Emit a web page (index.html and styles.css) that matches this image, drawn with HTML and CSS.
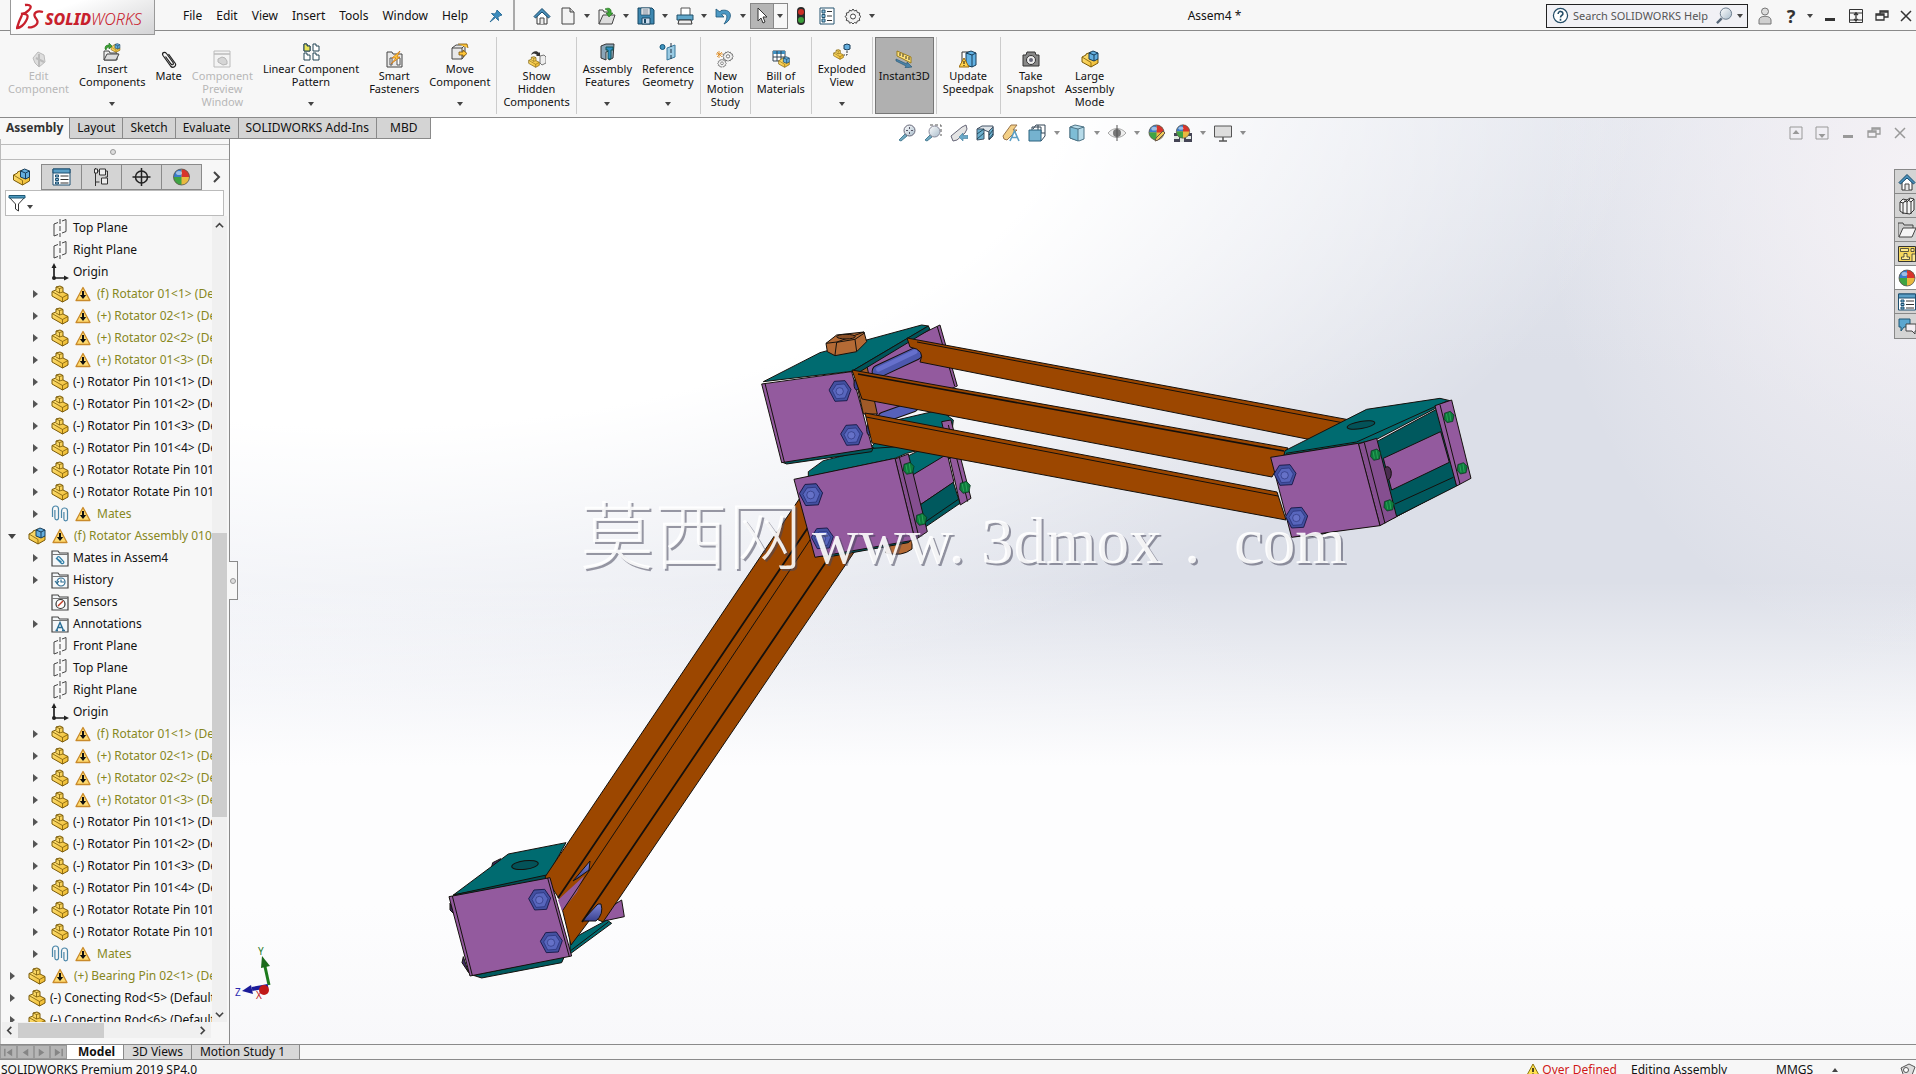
FILE: index.html
```html
<!DOCTYPE html>
<html lang="en">
<head>
<meta charset="utf-8">
<title>Assem4 - SOLIDWORKS</title>
<link rel="stylesheet" href="styles.css">
</head>
<body>
<svg class="defs" aria-hidden="true">
  <defs>
    <linearGradient id="gold" x1="0" y1="0" x2="1" y2="1"><stop offset="0" stop-color="#ffe680"/><stop offset="1" stop-color="#efb82a"/></linearGradient>
    <linearGradient id="steel" x1="0" y1="0" x2="0" y2="1"><stop offset="0" stop-color="#7d85d8"/><stop offset="1" stop-color="#39418e"/></linearGradient>
    <linearGradient id="glass" x1="0" y1="0" x2="1" y2="1"><stop offset="0" stop-color="#fff"/><stop offset="1" stop-color="#a9bccb"/></linearGradient>
  </defs>
  <symbol id="home" viewBox="0 0 18 18"><path d="M4 9v8h10V9L9 4z" fill="#fff" stroke="#333"/><path d="M7 17v-6h4v6" fill="#e8e8e8" stroke="#444"/><path d="M1 9.500 9 1.500l8 8-1.500 1.500L9 5l-6.500 6z" fill="#4a90ba" stroke="#16486a"/></symbol>
  <symbol id="page" viewBox="0 0 18 18"><path d="M3 1h8l4 4v12H3z" fill="#f3f3f3" stroke="#444"/><path d="M11 1v4h4" fill="#ccc" stroke="#444"/></symbol>
  <symbol id="open" viewBox="0 0 18 18"><path d="M1 17V3h4l1 2h6v3" fill="#eee" stroke="#444"/><path d="M1 17 5 8h12l-3 9z" fill="#ddd" stroke="#444"/><path d="M7 2c4-2 7 0 6 4h2l-4 4-3-4h2c1-2-1-3-3-4z" fill="#3ea536" stroke="#1d6a1a" stroke-width=".6"/></symbol>
  <symbol id="save" viewBox="0 0 18 18"><path d="M1 1h14l2 2v14H1z" fill="#3d87b0" stroke="#174663"/><path d="M4 1h9v7H4z" fill="#fff" stroke="#174663" stroke-width=".7"/><path d="M5.500 3h6M5.500 5h6M5.500 7h6" stroke="#678"/><path d="M5 11h8v6H5z" fill="#cde" stroke="#174663"/><path d="M7 12h2v4H7z" fill="#174663"/></symbol>
  <symbol id="print" viewBox="0 0 18 18"><path d="M5 8V1h9v7" fill="#fff" stroke="#555"/><path d="M1 8h16v5H1z" fill="#62a8cb" stroke="#21506b"/><path d="M3 13h12l1 4H2z" fill="#eee" stroke="#333"/></symbol>
  <symbol id="undo" viewBox="0 0 18 18"><path d="M1 2v8h8L6.500 7.500C12 5 14 10 9 17c9-4 9-16-3-13.500L5 5z" fill="#4d99c4" stroke="#1d5578" stroke-width=".8"/></symbol>
  <symbol id="cursor" viewBox="0 0 18 18"><path d="M5 1v13l3-3 2 5 2-1-2-5h4z" fill="#fff" stroke="#333"/></symbol>
  <symbol id="lights" viewBox="0 0 18 18"><rect x="5" y="0" width="8" height="18" rx="4" fill="#2a2a2a"/><circle cx="9" cy="5" r="3" fill="#cc2f26"/><circle cx="9" cy="13" r="3" fill="#3c9f3c"/></symbol>
  <symbol id="props" viewBox="0 0 18 18"><path d="M2 1h14v16H2z" fill="#fff" stroke="#24536f"/><path d="M4 3h3v3H4zM4 7.500h3v3H4zM4 12h3v3H4z" fill="#8cc3e0" stroke="#24536f"/><path d="M9 4.500h5M9 9h5M9 13.500h5" stroke="#333"/></symbol>
  <symbol id="gear" viewBox="0 0 18 18"><path d="M9 2l1.500 2 2-.8.8 2.300 2.400.5-.4 2.300L17 9.500l-1.700 1.700.4 2.300-2.400.5-.8 2.200-2-.7L9 17l-1.500-1.500-2 .7-.8-2.200-2.400-.5.4-2.300L1 9.500l1.700-1.200L2.300 6l2.400-.5.8-2.300 2 .8z" fill="#f2f2f2" stroke="#444"/><circle cx="9" cy="9.500" r="2.500" fill="#fff" stroke="#444"/></symbol>
  <symbol id="pin" viewBox="0 0 14 14"><path d="M8 1l5 5-2 .5-2 2 .5 3-3-3L1 13l4.500-5.500-3-3 3 .5 2-2z" fill="#3b8bbd" stroke="#2a6d98"/></symbol>
  <symbol id="part" viewBox="0 0 18 18"><path d="M1 6.500 5 5V2l4-1 3 1.500V7l5 2.500v4.500L11.500 17 1 11z" fill="url(#gold)" stroke="#7a5a08"/><path d="M1 6.500 11.500 12.500 17 9.500M11.500 12.500V17M5 2l3.500 1.500L12 2.500M8.500 3.500V8L5 6M8.500 8 12 7" fill="none" stroke="#7a5a08" stroke-width=".8"/></symbol>
  <symbol id="asm" viewBox="0 0 18 18"><path d="M1 7 5 5V4l5-2 4 7 3 0v4L10 17 1 12z" fill="url(#gold)" stroke="#7a5a08"/><path d="M1 7l9 5.500V17" fill="none" stroke="#7a5a08" stroke-width=".8"/><path d="M8 3l4-2 5 2v6l-4 2-5-2z" fill="#64aede" stroke="#183c58"/><path d="M8 3l5 2 4-2M13 5v6" fill="none" stroke="#183c58"/></symbol>
  <symbol id="plane" viewBox="0 0 18 18"><path d="M7 3.500 3 5v12l4-1.500M11 2l4-1.500v12L11 14" fill="none" stroke="#444"/><path d="M9 0v18" stroke="#444" stroke-dasharray="5 2"/></symbol>
  <symbol id="origin" viewBox="0 0 18 18"><path d="M3 3v12h12" fill="none" stroke="#222" stroke-width="1.700"/><path d="M3 0 5.500 5h-5zM18 15l-5 2.500v-5z" fill="#222"/><circle cx="3" cy="15" r="2" fill="#222"/></symbol>
  <symbol id="mates" viewBox="0 0 18 18"><path d="M1.500 12V4a3 3 0 0 1 6 0v9a1.800 1.800 0 0 1-3.600 0V5M10.500 13V6a3 3 0 0 1 6 0v8a1.800 1.800 0 0 1-3.600 0V7" fill="none" stroke="#4a86a8" stroke-width="1.200"/></symbol>
  <symbol id="warn" viewBox="0 0 16 16"><path d="M8 1.500 15 14.500H1z" fill="#ffdb70" stroke="#c98a2a" stroke-linejoin="round" stroke-width="1.300"/><path d="M8 5v5" stroke="#111" stroke-width="2"/><path d="M4.800 9h6.400L8 13z" fill="#111"/></symbol>
  <symbol id="folder" viewBox="0 0 18 18"><path d="M1 17V2h6l1.500 2H17v13z" fill="#f4f7f9" stroke="#444" stroke-width="1.200"/><path d="M1 5.500h16" stroke="#777"/></symbol>
  <symbol id="fmates" viewBox="0 0 18 18"><use href="#folder"/><path d="M5 9l5 5c2 2 4-1 2-2L8.500 8c-2-1-3 1-2 2l4 3" fill="none" stroke="#2e7da6" stroke-width="1.200"/></symbol>
  <symbol id="fhist" viewBox="0 0 18 18"><use href="#folder"/><circle cx="10" cy="11" r="4" fill="#fff" stroke="#2e6d92" stroke-width="1.200"/><path d="M10 8.500V11h3M4 10l2 2.500L8 10" fill="none" stroke="#2e6d92" stroke-width="1.200"/></symbol>
  <symbol id="fsens" viewBox="0 0 18 18"><use href="#folder"/><circle cx="9.500" cy="11" r="4.500" fill="#fff" stroke="#333" stroke-width="1.200"/><path d="M7 13l5-5" stroke="#c43b25" stroke-width="1.500"/></symbol>
  <symbol id="fann" viewBox="0 0 18 18"><use href="#folder"/><path d="M5.500 15.500 9 7.500l3.500 8M7 12.500h4M4.500 15.500h2.500M11 15.500h3" fill="none" stroke="#2b6f96" stroke-width="1.400"/></symbol>
  <symbol id="ball" viewBox="0 0 18 18"><circle cx="9" cy="9" r="8" fill="#e9b93f"/><path d="M9 9V1a8 8 0 0 1 8 8z" fill="#d8342b"/><path d="M9 9H1a8 8 0 0 1 8-8z" fill="#3a7ccb"/><path d="M9 9v8a8 8 0 0 1-8-8z" fill="#3fa443"/><circle cx="9" cy="9" r="8" fill="none" stroke="#555" stroke-width=".8"/><ellipse cx="6.500" cy="5" rx="3" ry="2" fill="#fff" opacity=".5"/></symbol>
  <symbol id="config" viewBox="0 0 18 18"><path d="M3 0v18M3 3h4M3 14h4" fill="none" stroke="#333"/><path d="M2 1h3v4H2zM7 1h6v6H7zM9 10h6v6H9z" fill="#eee" stroke="#333"/><path d="M13 3h2v6h-2" fill="none" stroke="#333"/></symbol>
  <symbol id="target" viewBox="0 0 18 18"><circle cx="9" cy="9" r="6" fill="none" stroke="#222" stroke-width="1.500"/><path d="M9 0v18M0 9h18" stroke="#222" stroke-width="1.500"/></symbol>
  <symbol id="list" viewBox="0 0 18 18"><path d="M0.500 1h17v16H.5z" fill="#fff" stroke="#1d4f70"/><path d="M.5 1h17v4H.5z" fill="#5a9fc6" stroke="#1d4f70"/><path d="M3 7h3v2H3zM3 10.500h3v2H3zM3 14h3v2H3z" fill="#8cc3e0" stroke="#1d4f70"/><path d="M8 8h8M8 11.500h8M8 15h8" stroke="#333"/></symbol>
  <symbol id="funnel" viewBox="0 0 18 18"><path d="M1 3h16l-6.500 7v7l-3-2v-5z" fill="#fff" stroke="#333"/><path d="M1 1.500h16V4H1z" fill="#4d9abf" stroke="#1e5876"/></symbol>
  <symbol id="clip" viewBox="0 0 18 18"><path d="M5.500 6.500l5.500 7.500c1.500 1.500 3 .5 2-1.500L6.500 3.500C4.500 1 1.500 3 3 5.500l7.500 10.500c2.500 3 6.500 0 4.500-3L8.500 4" fill="none" stroke="#222" stroke-width="1.200"/></symbol>
  <symbol id="insert" viewBox="0 0 18 18"><use href="#asm" x="7" y="0" width="11" height="10"/><path d="M1 17V8h5l1 2h7v7z" fill="#eee" stroke="#444"/><path d="M1 17l3-6h12l-3 6z" fill="#ddd" stroke="#444"/><path d="M2 6c0-3 1-4 4-4V0l3 3-3 3V4C4 4 4 5 3 7z" fill="#3ea536" stroke="#1d6a1a" stroke-width=".6"/></symbol>
  <symbol id="preview" viewBox="0 0 18 18"><path d="M1 1h16v16H1z" fill="#f3f3f3" stroke="#bbb"/><path d="M1 4h16" stroke="#bbb" stroke-width="1.500"/><path d="M5 9l4-2 3 1 2 3v3l-4 1-5-3z" fill="#d5d5d5" stroke="#b5b5b5"/></symbol>
  <symbol id="editc" viewBox="0 0 18 18"><path d="M3 8l5-6 6 3 1 7-6 5-4-4z" fill="#ddd" stroke="#bbb"/><path d="M9 4v13M6 8l8 4" stroke="#bbb" stroke-width="2"/></symbol>
  <symbol id="pattern" viewBox="0 0 18 18"><path d="M2 1h3v2h3v5H2zM11 1h3v2h3v5h-6zM2 10h3v2h3v5H2zM11 10h3v2h3v5h-6z" fill="#fff" stroke="#245"/><path d="M2 1h3v2h3v5H2z" fill="#e8e45a" stroke="#245"/></symbol>
  <symbol id="smart" viewBox="0 0 18 18"><path d="M2 17V2h5l1 2h9v13z" fill="#e9e9e9" stroke="#444"/><path d="M5 15V8h2v7zM12 8h3v7h-3z" fill="#fff" stroke="#555"/><path d="M15 1 7 8h4l-5 6 9-7h-3z" fill="#ffc73a" stroke="#c56d10" stroke-width=".7"/></symbol>
  <symbol id="move" viewBox="0 0 18 18"><path d="M1 5l4-3h9v10l-3 4H1z" fill="#e8e8e8" stroke="#444"/><path d="M1 5h10v11M11 5l3-3" fill="none" stroke="#444"/><path d="M7 1h9l1 4M8 9h4V7l4 3.500L12 14v-2H8z" fill="#ffc73a" stroke="#7a5208" stroke-width=".8"/></symbol>
  <symbol id="show" viewBox="0 0 18 18"><use href="#part" x="0" y="6" width="12" height="12"/><path d="M12 6l4-1 2 2v6l-4 2-2-2z" fill="#eee" stroke="#777"/><path d="M3 5c1-4 6-5 8-2l1-1v4H8l1-1C7 3 5 3 3 5z" fill="#333"/></symbol>
  <symbol id="feat" viewBox="0 0 18 18"><path d="M3 3l5-2h8l-1 14-4 2V8L8 9v8l-5-2z" fill="#8aa5b8" stroke="#333"/><path d="M8 4h7v3h-2v9h-3V7H8z" fill="#2e8ec4" stroke="#155"/></symbol>
  <symbol id="refgeo" viewBox="0 0 18 18"><circle cx="3.500" cy="4" r="2.500" fill="#3f93bd" stroke="#155478"/><path d="M8 5l8-3v12l-8 3z" fill="#9bcbe3" stroke="#36789c"/><path d="M12 0v18" stroke="#234" stroke-dasharray="4 2"/></symbol>
  <symbol id="motion" viewBox="0 0 18 18"><use href="#gear" x="6" y="0" width="12" height="12"/><use href="#gear" x="1" y="8" width="10" height="10"/><path d="M3 1v7M0 4h7M1 2l5 5M6 2 1 7" stroke="#d98314" stroke-width=".8"/></symbol>
  <symbol id="bom" viewBox="0 0 18 18"><path d="M1 1h12v10H1z" fill="#fff" stroke="#345"/><path d="M1 1h12v3H1z" fill="#3e8fc0"/><path d="M1 7h12M5 1v10M9 1v10" stroke="#345"/><use href="#asm" x="6" y="6" width="12" height="12"/></symbol>
  <symbol id="explode" viewBox="0 0 18 18"><use href="#part" x="0" y="6" width="11" height="11"/><path d="M11 2l3-1 3 1v4l-3 1-3-1z" fill="#64aede" stroke="#183c58"/><path d="M14 8v4h-3" fill="none" stroke="#333" stroke-dasharray="2 1"/></symbol>
  <symbol id="instant" viewBox="0 0 18 18"><path d="M2 1l14 6v6L2 6z" fill="#ffe27a" stroke="#9a7c1c"/><path d="M5 3v3M8 4v3M11 6v3M14 7v3" stroke="#333"/><path d="M1 9l11 5v-2l5 5-7 1 1-2L1 11z" fill="#4a83a8" stroke="#23536f" stroke-width=".6"/></symbol>
  <symbol id="update" viewBox="0 0 18 18"><path d="M3 2h8v14H3z" fill="#fff" stroke="#333"/><path d="M7 3l5-2 5 2v12l-4 2-6-2z" fill="#62b2e4" stroke="#183c58"/><path d="M7 3l6 2 4-2M13 5v12" fill="none" stroke="#183c58"/><path d="M5 8l5 9H0z" fill="#ffd24d" stroke="#9a6a08"/><path d="M5 11v3M5 15v1" stroke="#111"/></symbol>
  <symbol id="camera" viewBox="0 0 18 18"><path d="M1 5h3l1-3h8l1 3h3v11H1z" fill="#888" stroke="#333"/><circle cx="9" cy="10" r="4.500" fill="#eee" stroke="#333"/><circle cx="9" cy="10" r="2" fill="#667"/></symbol>
  <symbol id="zoomfit" viewBox="0 0 18 18"><path d="M1 16 7 10l2 2-6 5z" fill="#72a9c0" stroke="#4a7f96"/><circle cx="11.500" cy="6.500" r="5.500" fill="url(#glass)" stroke="#667"/><path d="M11.500 3v7M8 6.500h7" stroke="#556" stroke-dasharray="2 3"/></symbol>
  <symbol id="zoomarea" viewBox="0 0 18 18"><path d="M6 1h11v11" fill="none" stroke="#555" stroke-dasharray="3 2"/><path d="M1 16 6 11l2 2-5 4z" fill="#72a9c0" stroke="#4a7f96"/><circle cx="10.500" cy="7.500" r="5.500" fill="url(#glass)" stroke="#889"/></symbol>
  <symbol id="prev" viewBox="0 0 18 18"><path d="M1 12 12 3l4-2 1 4-2 4-8 7-4 1z" fill="#e4e4e4" stroke="#667"/><path d="M9 13l4-4v2.500h5v3h-5V17z" fill="#6aa8c7" stroke="#427e9c" stroke-width=".6"/></symbol>
  <symbol id="section" viewBox="0 0 18 18"><path d="M1 5l5-3h11v9l-4 4V8l-5-2z" fill="#dde3e8" stroke="#456"/><path d="M1 5h7v10l-7 1z" fill="#6cb0cf" stroke="#456"/><path d="M13 7l4-4v9l-4 4z" fill="#6cb0cf" stroke="#456"/><path d="M1 10l7-5M1 15l7-6M13 11l4-5M13 15l4-5" stroke="#134" stroke-width=".8"/></symbol>
  <symbol id="dynann" viewBox="0 0 18 18"><path d="M1 12 9 1h6l-4 5h4L5 16l-3-1z" fill="#f3cf86" stroke="#99744a"/><path d="M8 17l4.500-10L17 17M10 13.500h5" fill="none" stroke="#5c9fc4" stroke-width="1.600"/></symbol>
  <symbol id="orient" viewBox="0 0 18 18"><path d="M5 5l3-4h9v11l-4 5" fill="#fff" stroke="#345"/><path d="M4 6V3h9v6h4M10 1v8" fill="none" stroke="#345"/><path d="M1 6h12v11H1z" fill="#75b2cf" stroke="#2d637e"/></symbol>
  <symbol id="cube" viewBox="0 0 18 18"><path d="M2 3l5-2 9 2v12l-5 2-9-3z" fill="#b7dbe9" stroke="#4d7385"/><path d="M2 3l8 2v12l-8-3z" fill="#7ebdd6" stroke="#4d7385"/><path d="M10 5l6-2" stroke="#4d7385"/></symbol>
  <symbol id="eye" viewBox="0 0 18 18"><path d="M0 9c5-6 13-6 18 0-5 6-13 6-18 0z" fill="#eee" stroke="#aaa"/><circle cx="9" cy="9" r="4" fill="#777"/><path d="M9 1v16" stroke="#555"/></symbol>
  <symbol id="appear" viewBox="0 0 18 18"><use href="#ball" width="17" height="17"/><path d="M8 14 15 7l2 2-7 7-3 1z" fill="#f0c95a" stroke="#654"/></symbol>
  <symbol id="scene" viewBox="0 0 18 18"><path d="M0 9h18v9H0z" fill="#445"/><path d="M0 12h5v3H0zM6 14h4v4H6zM12 12h5v3h-5z" fill="#dfe6df"/><use href="#ball" x="1" width="16" height="15"/></symbol>
  <symbol id="monitor" viewBox="0 0 18 18"><path d="M0.500 2h17v11H.5z" fill="#ddd" stroke="#555"/><path d="M9 13v4M5 17h8" stroke="#555" stroke-width="1.500"/></symbol>
  <symbol id="books" viewBox="0 0 18 18"><path d="M2 5l3-3 4 1 3-2 4 1v11l-4 4-7-1-3-2z" fill="#f4f4f4" stroke="#333"/><path d="M2 5l3 1v11M6 4l3 1v12M10 3l3 2v12M5 6l4-3M9 5l3-3M13 5l3-3" fill="none" stroke="#333"/></symbol>
  <symbol id="files" viewBox="0 0 18 18"><path d="M0 16V2h5l1 2h9v4" fill="#ccc" stroke="#444"/><path d="M1 16 5 7h13l-4 9z" fill="#f6f6f6" stroke="#444"/></symbol>
  <symbol id="palette" viewBox="0 0 18 18"><path d="M.5 1.500h17v15H.5z" fill="#f5d65c" stroke="#333"/><path d="M2.500 3.500h8v3h-8zM13 3.500h3v3h-3zM6 8.500h3v3.500h2.500v2.500h-8V12H6zM14 9h3.500v7.500H14z" fill="#ffe98e" stroke="#333" stroke-width=".8"/></symbol>
  <symbol id="chat" viewBox="0 0 18 18"><path d="M1 2h11v8H6l-3 4v-4H1z" fill="#5ba6d0" stroke="#1f5675"/><path d="M8 7h10v7h-1v3l-3-3H8z" fill="#f3eef3" stroke="#444"/></symbol>
  <symbol id="restore" viewBox="0 0 14 14"><path d="M5 5V2h8v6H9M1 5h8v6H1z" fill="none" stroke="currentColor" stroke-width="1.300"/><path d="M5 3h8M1 6h8" stroke="currentColor" stroke-width="1.500"/></symbol>
  <symbol id="close" viewBox="0 0 14 14"><path d="M2 2l10 10M12 2 2 12" stroke="currentColor" stroke-width="1.500"/></symbol>
  <symbol id="min" viewBox="0 0 14 14"><path d="M2 9h10v3H2z" fill="currentColor"/></symbol>
  <symbol id="span" viewBox="0 0 14 14"><path d="M.5.5h13v13H.5zM.5 4h13M.5 11h5M9 11h4.500" fill="none" stroke="currentColor"/><path d="M7 3v9M5 6l2-2 2 2M5 10l2 2 2-2" fill="none" stroke="currentColor" stroke-width="1.300"/></symbol>
  <symbol id="up" viewBox="0 0 14 14"><path d="M1 1h12v12H1z" fill="none" stroke="currentColor"/><path d="M3.500 8 7 4l3.500 4z" fill="currentColor"/></symbol>
  <symbol id="down" viewBox="0 0 14 14"><path d="M1 1h12v12H1z" fill="none" stroke="currentColor"/><path d="M3.500 8 7 12l3.500-4z" fill="currentColor"/></symbol>
  <symbol id="bolt" viewBox="-18 -18 36 36"><path d="M-17-2-9-15 7-16 16-3 10 14-8 15z" fill="#4350a0" stroke="#111540" stroke-width="1.300"/><path d="M-12-1-6-10 6-11 12-2 7 10-6 11z" fill="#5866bd" stroke="#20286b" stroke-width=".9"/><circle cx="-1" r="5.500" fill="#6672c8" stroke="#20286b" stroke-width=".8"/></symbol>
  <symbol id="gbolt" viewBox="-10 -10 20 20"><path d="M-7-6 2-9 8-3 6 7-3 9-8 3z" fill="#0f7a3d" stroke="#052a14" stroke-width="1"/><path d="M-4-5-2 6M1-7 3 6" stroke="#2eb35f" stroke-width="1.200"/></symbol>
</svg>

<header class="titlebar">
  <div class="logo">
    <svg class="mark" viewBox="0 0 28 28"><path d="M9 2c6-1 7 2 4 5-2 2-5 4-8 4 7-1 8 2 5 7-2 4-6 7-9 7 1-4 3-9 5-13M27 9c-6-2-10 1-8 5 2 3 4 5 1 8-2 2-6 3-8 2" fill="none" stroke="#c8202c" stroke-width="2.300"/></svg>
    <span class="brand"><b>SOLID</b>WORKS</span>
  </div>
  <nav class="menu">
    <a href="#">File</a><a href="#">Edit</a><a href="#">View</a><a href="#">Insert</a><a href="#">Tools</a><a href="#">Window</a><a href="#">Help</a>
    <button class="ico pin" aria-label="Pin menu"><svg><use href="#pin"/></svg></button>
  </nav>
  <div class="quick">
    <button class="ico" aria-label="Home"><svg><use href="#home"/></svg></button>
    <button class="ico" aria-label="New"><svg><use href="#page"/></svg></button><i class="arr"></i>
    <button class="ico" aria-label="Open"><svg><use href="#open"/></svg></button><i class="arr"></i>
    <button class="ico" aria-label="Save"><svg><use href="#save"/></svg></button><i class="arr"></i>
    <button class="ico" aria-label="Print"><svg><use href="#print"/></svg></button><i class="arr"></i>
    <button class="ico" aria-label="Undo"><svg><use href="#undo"/></svg></button><i class="arr"></i>
    <span class="select"><button class="ico on" aria-label="Select"><svg><use href="#cursor"/></svg></button><i class="arr"></i></span>
    <button class="ico" aria-label="Rebuild"><svg><use href="#lights"/></svg></button>
    <button class="ico" aria-label="File properties"><svg><use href="#props"/></svg></button>
    <button class="ico" aria-label="Options"><svg><use href="#gear"/></svg></button><i class="arr"></i>
  </div>
  <div class="doc">Assem4 *</div>
  <label class="search">
    <svg viewBox="0 0 18 18"><circle cx="9" cy="9" r="7.500" fill="#fff" stroke="#234c66" stroke-width="1.300"/><path d="M6.500 7.500c0-4 5.500-3.500 5 0-.3 1.500-2.500 1.500-2.500 3.500M9 12.500v2" fill="none" stroke="#234c66" stroke-width="1.700"/></svg>
    <input type="text" placeholder="Search SOLIDWORKS Help" aria-label="Search SOLIDWORKS Help">
    <svg viewBox="0 0 18 18"><path d="M1 17l5-5" stroke="#567" stroke-width="2.500"/><circle cx="10.500" cy="7" r="6" fill="url(#glass)" stroke="#678"/></svg>
    <i class="arr"></i>
  </label>
  <div class="sys">
    <button class="ico" aria-label="Account"><svg viewBox="0 0 18 18"><circle cx="9" cy="4.500" r="3.500" fill="#ddd" stroke="#777"/><path d="M3 17v-4c0-5 12-5 12 0v4z" fill="#d0d0d0" stroke="#777"/></svg></button>
    <button class="help">?</button><i class="arr"></i>
    <button class="ico s" aria-label="Minimize"><svg><use href="#min"/></svg></button>
    <button class="ico s" aria-label="Span displays"><svg><use href="#span"/></svg></button>
    <button class="ico s" aria-label="Restore"><svg><use href="#restore"/></svg></button>
    <button class="ico s end" aria-label="Close"><svg><use href="#close"/></svg></button>
  </div>
</header>

<div class="ribbon">
  <button class="cmd off"><svg><use href="#editc"/></svg><span>Edit<br>Component</span></button>
  <button class="cmd drop"><svg><use href="#insert"/></svg><span>Insert<br>Components</span><i class="arr"></i></button>
  <button class="cmd"><svg><use href="#clip"/></svg><span>Mate</span></button>
  <button class="cmd off"><svg><use href="#preview"/></svg><span>Component<br>Preview<br>Window</span></button>
  <button class="cmd drop"><svg><use href="#pattern"/></svg><span>Linear Component<br>Pattern</span><i class="arr"></i></button>
  <button class="cmd"><svg><use href="#smart"/></svg><span>Smart<br>Fasteners</span></button>
  <button class="cmd drop"><svg><use href="#move"/></svg><span>Move<br>Component</span><i class="arr"></i></button>
  <i class="sep"></i>
  <button class="cmd"><svg><use href="#show"/></svg><span>Show<br>Hidden<br>Components</span></button>
  <i class="sep"></i>
  <button class="cmd drop"><svg><use href="#feat"/></svg><span>Assembly<br>Features</span><i class="arr"></i></button>
  <button class="cmd drop"><svg><use href="#refgeo"/></svg><span>Reference<br>Geometry</span><i class="arr"></i></button>
  <i class="sep"></i>
  <button class="cmd"><svg><use href="#motion"/></svg><span>New<br>Motion<br>Study</span></button>
  <i class="sep"></i>
  <button class="cmd"><svg><use href="#bom"/></svg><span>Bill of<br>Materials</span></button>
  <i class="sep"></i>
  <button class="cmd drop"><svg><use href="#explode"/></svg><span>Exploded<br>View</span><i class="arr"></i></button>
  <i class="sep"></i>
  <button class="cmd active"><svg><use href="#instant"/></svg><span>Instant3D</span></button>
  <i class="sep"></i>
  <button class="cmd"><svg><use href="#update"/></svg><span>Update<br>Speedpak</span></button>
  <i class="sep"></i>
  <button class="cmd"><svg><use href="#camera"/></svg><span>Take<br>Snapshot</span></button>
  <button class="cmd"><svg><use href="#asm"/></svg><span>Large<br>Assembly<br>Mode</span></button>
</div>

<main class="work">
  <div class="tabs">
    <button class="on">Assembly</button><button>Layout</button><button>Sketch</button><button>Evaluate</button><button>SOLIDWORKS Add-Ins</button><button class="last">MBD</button>
  </div>
  <aside class="side">
    <div class="grip"><i></i></div>
    <div class="panes">
      <button class="on" aria-label="Feature tree"><svg><use href="#asm"/></svg></button>
      <button aria-label="Properties"><svg><use href="#list"/></svg></button>
      <button aria-label="Configurations"><svg><use href="#config"/></svg></button>
      <button aria-label="Dimensions"><svg><use href="#target"/></svg></button>
      <button aria-label="Appearances"><svg><use href="#ball"/></svg></button>
      <button class="more" aria-label="More panes"><svg viewBox="0 0 8 14"><path d="M1 2l5 5-5 5" fill="none" stroke="#444" stroke-width="2"/></svg></button>
    </div>
    <div class="filter"><svg><use href="#funnel"/></svg><i class="arr"></i></div>
    <div class="treebox">
      <ul class="tree" id="tree"></ul>
      <div class="vbar">
        <svg viewBox="0 0 10 10"><path d="M1 7l4-4 4 4" fill="none" stroke="#444" stroke-width="1.800"/></svg>
        <div class="vthumb"></div>
        <svg viewBox="0 0 10 10"><path d="M1 3l4 4 4-4" fill="none" stroke="#444" stroke-width="1.800"/></svg>
      </div>
    </div>
    <div class="hbar">
      <svg viewBox="0 0 10 10"><path d="M7 1 3 5l4 4" fill="none" stroke="#444" stroke-width="1.800"/></svg>
      <div class="hthumb"></div>
      <svg viewBox="0 0 10 10"><path d="M3 1l4 4-4 4" fill="none" stroke="#444" stroke-width="1.800"/></svg>
    </div>
  </aside>

  <section class="view">
    <svg class="model" viewBox="230 118 1686 926" preserveAspectRatio="xMidYMid slice">
      <g stroke="#14100c" stroke-width="1" stroke-linejoin="round">
        <!-- lower arm base: parts behind the arm -->
        <g transform="translate(420 820) scale(.3333)" stroke-width="3">
          <path d="M570 262l35-22 8 50-65 14z" fill="#935a9e"/>
          <path d="M215 140l3-12 24-12-4 14zM90 250l0 20 14 14zM130 410l-4 18 20 30z" fill="#3d2b60"/>
          <path d="M100 225 265 102 438 68 380 172z" fill="#006b70"/>
          <path d="M100 225 380 165V180L104 232z" fill="#004f55"/>
          <ellipse cx="315" cy="135" rx="40" ry="13" fill="#035258" transform="rotate(-7 315 135)"/>
          <path d="M450 360v42l125-92-14-10z" fill="#006b70"/>
          <path d="M452 392 565 306" fill="none"/>
        </g>
        <!-- copper spigot under the middle block -->
        <path d="M886 546l26-8v11q-10 8-26 4z" fill="#b46a35"/>
        <!-- lower arm -->
        <path d="M812 480 545 877 560 900 571 945 592 917 603 922 876 520z" fill="#9c4700"/>
        <path d="M584 876 558 900 562 911 577 892z" fill="#935a9e" stroke="none"/>
        <path d="M590 861 573 881 578 878 589 870z" fill="url(#steel)"/>
        <path d="M598 904 582 921 596 921q8-7 5-17z" fill="url(#steel)"/>
        <path d="M836 486 558 898M868 500 582 922" fill="none" stroke-width="1.800"/>
        <path d="M846 486 563 910" fill="none"/>
        <g transform="translate(420 820) scale(.3333)" stroke-width="3">
          <path d="M160 466l25 8 240-46 8-18z" fill="#005a5f"/>
          <path d="M87 230 390 173 455 408 150 468z" fill="#935a9e"/>
          <path d="M97 228 157 466M383 174 448 410" fill="none"/>
          <use href="#bolt" x="324" y="204" width="72" height="72"/><use href="#bolt" x="359" y="332" width="72" height="72"/>
        </g>
        <!-- middle blocks -->
        <g transform="translate(740 310) scale(.3333)" stroke-width="3">
          <path d="M375 155 600 45 652 228 415 335z" fill="#935a9e"/>
          <path d="M592 50 644 228" fill="none"/>
          <path d="M340 175 378 155 412 312 370 312z" fill="#a05a28"/>
          <g fill="none" stroke-linecap="round">
            <path d="M415 184 528 131" stroke-width="40"/><path d="M415 184 528 131" stroke="#4d58ae" stroke-width="34"/><path d="M415 178 526 125" stroke="#6670cc" stroke-width="14"/>
            <path d="M430 322 520 290" stroke-width="34"/><path d="M430 322 520 290" stroke="#5661bb" stroke-width="28"/>
          </g>
          <path d="M470 330 600 300 640 330 630 420 390 415z" fill="#006b70"/>
          <path d="M605 335l28-5 60 235-32 20z" fill="#935a9e"/>
          <path d="M625 345 683 575" fill="none"/>
          <path d="M205 485 250 452 400 415 620 400 500 430 465 445 205 500z" fill="#006b70"/>
          <path d="M500 440 620 380 640 440 515 500z" fill="#006b70"/>
          <path d="M510 500 622 432 642 517 540 585z" fill="#935a9e"/>
          <path d="M540 585 640 517 660 580 555 652z" fill="#00595e"/>
          <path d="M550 640 655 568" fill="none"/>
          <path d="M230 738 520 685 505 698 270 740z" fill="#00595e"/>
          <path d="M465 447 505 432 562 665 525 690z" fill="#854f90"/>
          <path d="M162 508 465 445 525 690 225 742z" fill="#935a9e"/>
          <path d="M478 442 537 682" fill="none"/>
          <use href="#gbolt" x="486" y="453" width="40" height="44"/><use href="#gbolt" x="524" y="606" width="40" height="44"/><use href="#gbolt" x="655" y="510" width="40" height="44"/>
          <use href="#bolt" x="176" y="517" width="76" height="76"/><use href="#bolt" x="212" y="650" width="72" height="72"/>
          <path d="M70 215 240 128 545 45 565 48 335 184z" fill="#006b70"/>
          <path d="M335 184 565 48 570 58 345 194z" fill="#00545a"/>
          <path d="M258 100 290 75 372 66 380 95 350 125 285 137 262 125z" fill="#b46a35"/>
          <path d="M258 100l33-4 81-30M290 97l-5 38M345 88l5 36M290 97l55-9 30-20" fill="none"/>
          <ellipse cx="318" cy="80" rx="28" ry="7" fill="#8a4f26"/>
          <path d="M125 456 140 462 395 425 400 412z" fill="#00595e"/>
          <path d="M65 222 335 185 397 415 125 458z" fill="#935a9e"/>
          <path d="M75 220 133 456M345 190l14 46" fill="none"/>
          <use href="#bolt" x="265" y="208" width="72" height="72"/><use href="#bolt" x="300" y="340" width="72" height="72"/>
          <ellipse cx="350" cy="222" rx="8" ry="18" fill="#39418e"/><ellipse cx="388" cy="358" rx="8" ry="18" fill="#39418e"/>
        </g>
        <!-- upper arm bars -->
        <g fill="#9c4700">
          <path d="M907 338 1350 420 1312 440 920 362q6-12-10-15z"/><path d="M917 342 1344 423" fill="none"/>
          <path d="M852 370 1288 448 1272 477 862 399z"/><path d="M858 374 1284 451" fill="none" stroke-width="1.600"/>
          <path d="M865 413 1277 492 1286 520 872 443z"/><path d="M866 417 1278 496" fill="none"/>
        </g>
        <!-- end block -->
        <g transform="translate(1180 380) scale(.3333)" stroke-width="3">
          <path d="M335 470 600 435 830 315 640 415 400 468z" fill="#00595e"/>
          <path d="M590 185 775 85 830 318 648 410z" fill="#00595e"/>
          <path d="M610 235 782 155 808 247 635 330z" fill="#935a9e"/>
          <path d="M645 372 820 292" fill="none"/>
          <path d="M315 212 560 88 780 55 810 62 590 178 535 190 312 226z" fill="#006b70"/>
          <path d="M318 220 530 186 800 64" fill="none"/>
          <ellipse cx="543" cy="135" rx="42" ry="11" fill="#035258" transform="rotate(-10 543 135)"/>
          <path d="M765 77 815 60 873 295 830 318z" fill="#935a9e"/><path d="M780 74 840 312" fill="none"/>
          <ellipse cx="622" cy="280" rx="12" ry="20" fill="#4a2d50"/>
          <path d="M535 192 590 175 650 410 600 437z" fill="#854f90"/>
          <path d="M272 232 535 190 600 437 335 472z" fill="#935a9e"/>
          <path d="M553 188 615 430" fill="none"/>
          <use href="#gbolt" x="568" y="202" width="38" height="44"/><use href="#gbolt" x="608" y="354" width="38" height="44"/><use href="#gbolt" x="788" y="89" width="38" height="44"/><use href="#gbolt" x="828" y="243" width="38" height="44"/>
          <use href="#bolt" x="280" y="250" width="72" height="72"/><use href="#bolt" x="315" y="378" width="72" height="72"/>
        </g>
      </g>
      <!-- axis triad -->
      <path d="M269 985 264 962" stroke="#1c7a1c" stroke-width="3"/><path d="M262 956l8 10-9 2z" fill="#1c6a1c"/>
      <path d="M268 986 252 989" stroke="#1b1b99" stroke-width="4"/><path d="M242 991l9-6 2 9z" fill="#1b1b99"/>
      <circle cx="264" cy="990" r="5" fill="#c01818"/>
      <text class="axis" x="258" y="955" fill="#2a7a2a">Y</text><text class="axis" x="235" y="996" fill="#2a2ab0">Z</text><text class="axis" x="256" y="999" fill="#c01818">X</text>
      <text class="mark-text"><tspan x="580" y="563">莫西网</tspan><tspan x="812" y="563">www.</tspan><tspan x="981" y="563">3dmox</tspan><tspan x="1184" y="563">.</tspan><tspan x="1234" y="563">com</tspan></text>
    </svg>
    <div class="heads">
      <button class="ico" aria-label="Zoom to fit"><svg><use href="#zoomfit"/></svg></button>
      <button class="ico" aria-label="Zoom to area"><svg><use href="#zoomarea"/></svg></button>
      <button class="ico" aria-label="Previous view"><svg><use href="#prev"/></svg></button>
      <button class="ico" aria-label="Section view"><svg><use href="#section"/></svg></button>
      <button class="ico" aria-label="Annotation views"><svg><use href="#dynann"/></svg></button>
      <button class="ico" aria-label="View orientation"><svg><use href="#orient"/></svg></button><i class="arr"></i>
      <button class="ico" aria-label="Display style"><svg><use href="#cube"/></svg></button><i class="arr"></i>
      <button class="ico" aria-label="Hide or show"><svg><use href="#eye"/></svg></button><i class="arr"></i>
      <button class="ico" aria-label="Edit appearance"><svg><use href="#appear"/></svg></button>
      <button class="ico" aria-label="Apply scene"><svg><use href="#scene"/></svg></button><i class="arr"></i>
      <button class="ico" aria-label="View settings"><svg><use href="#monitor"/></svg></button><i class="arr"></i>
    </div>
    <div class="docwin">
      <button class="ico s" aria-label="Collapse up"><svg><use href="#up"/></svg></button>
      <button class="ico s" aria-label="Collapse down"><svg><use href="#down"/></svg></button>
      <button class="ico s" aria-label="Minimize document"><svg><use href="#min"/></svg></button>
      <button class="ico s" aria-label="Restore document"><svg><use href="#restore"/></svg></button>
      <button class="ico s" aria-label="Close document"><svg><use href="#close"/></svg></button>
    </div>
    <div class="task">
      <button aria-label="Resources"><svg><use href="#home"/></svg></button>
      <button aria-label="Design library"><svg><use href="#books"/></svg></button>
      <button aria-label="File explorer"><svg><use href="#files"/></svg></button>
      <button aria-label="View palette"><svg><use href="#palette"/></svg></button>
      <button class="on" aria-label="Appearances and scenes"><svg><use href="#ball"/></svg></button>
      <button aria-label="Custom properties"><svg><use href="#list"/></svg></button>
      <button aria-label="Forum"><svg><use href="#chat"/></svg></button>
    </div>
    <button class="handle" aria-label="Collapse panel"><i></i></button>
  </section>
</main>

<div class="sheets">
  <div class="nav">
    <button aria-label="First"><svg viewBox="0 0 12 12"><path d="M2 2v8" stroke="#858585" stroke-width="1.500"/><path d="M10 2v8L4 6z" fill="#858585"/></svg></button>
    <button aria-label="Previous"><svg viewBox="0 0 12 12"><path d="M9 2v8L3 6z" fill="#858585"/></svg></button>
    <button aria-label="Next"><svg viewBox="0 0 12 12"><path d="M3 2v8l6-4z" fill="#858585"/></svg></button>
    <button aria-label="Last"><svg viewBox="0 0 12 12"><path d="M10 2v8" stroke="#858585" stroke-width="1.500"/><path d="M2 2v8l6-4z" fill="#858585"/></svg></button>
  </div>
  <button class="on">Model</button><button>3D Views</button><button class="wide">Motion Study 1</button>
</div>
<footer class="status">
  <span class="ver">SOLIDWORKS Premium 2019 SP4.0</span>
  <span class="over"><svg viewBox="0 0 14 14"><path d="M7 1l6.500 12H.5z" fill="#ffe14d" stroke="#8a7410"/><path d="M7 5v4M7 10.500V12" stroke="#111" stroke-width="1.500"/></svg>Over Defined</span>
  <span class="mode">Editing Assembly</span>
  <span class="units">MMGS</span>
  <i class="arr upw"></i>
  <svg class="tag" viewBox="0 0 16 16"><path d="M1 6l8-4 6 3-3 8-8 2z" fill="#ddd" stroke="#555"/><circle cx="6" cy="8" r="2.500" fill="#fff" stroke="#555"/></svg>
</footer>
<script src="app.js"></script>
</body>
</html>
```
FILE: styles.css
```css
* { box-sizing: border-box; }
body { margin: 0; height: 100vh; display: flex; flex-direction: column; overflow: hidden; background: #f7f7f7; color: #111; font: 12px/16px "Noto Sans", "Open Sans", sans-serif; }
button { font: inherit; color: inherit; background: none; border: 0; padding: 0; margin: 0; }
a { color: inherit; text-decoration: none; }
.defs { position: absolute; width: 0; height: 0; }
svg { display: block; flex: none; }
.ico { width: 26px; height: 24px; flex: none; display: flex; align-items: center; justify-content: center; }
.ico svg { width: 18px; height: 18px; }
.ico.s svg { width: 14px; height: 14px; }
.arr { width: 13px; flex: none; display: block; }
.arr::after { content: ""; display: block; width: 0; margin: 0 auto; border: 3px solid transparent; border-top: 4px solid #444; border-bottom: 0; }

.titlebar { height: 31px; flex: none; display: flex; align-items: center; border-bottom: 1px solid #8a8a8a; }
.logo { align-self: flex-start; position: relative; z-index: 2; width: 145px; height: 35px; margin-left: 10px; flex: none; display: flex; align-items: center; padding-left: 5px; border: 1px solid #999; border-top: 0; background: linear-gradient(160deg, #fff 30%, #d4d4d6 100%); color: #c8202c; }
.mark { width: 28px; height: 28px; }
.brand { margin-left: 1px; font: italic 300 16px/20px "Noto Sans", sans-serif; padding-top: 4px; }
.brand b { font-weight: 800; }
.menu { display: flex; align-items: center; margin-left: 28px; gap: 14px; align-self: stretch; border-right: 2px solid #aaa; width: 332px; flex: none; padding-top: 1px; }
.menu .pin { width: 14px; margin-left: auto; margin-right: 10px; }
.menu .pin svg { width: 14px; height: 14px; }
.quick { display: flex; align-items: center; margin-left: 14px; padding-top: 2px; }
.quick .arr { width: 12px; margin-right: 1px; }
.select { display: flex; align-items: center; border: 1px solid #888; }
.select .on { background: #b5b5b5; width: 23px; border-right: 1px solid #888; }
.doc { flex: 1; text-align: center; padding: 1px 0 0 4px; }
.search { display: flex; align-items: center; width: 202px; height: 24px; flex: none; border: 1px solid #222; padding: 0 1px 0 5px; background: #f1f1f5; margin-top: 1px; }
.search svg { width: 17px; height: 17px; }
.search input { flex: 1; min-width: 0; border: 0; background: none; font: inherit; font-size: 11px; padding: 0 0 0 4px; }
.search input::placeholder { color: #555; opacity: 1; }
.sys { display: flex; align-items: center; color: #333; margin-left: 4px; flex: none; padding-top: 1px; }
.sys .end { width: 21px; }
.help { font-size: 18px; font-weight: 700; width: 26px; }
.sys .arr { width: 12px; margin-right: 1px; }

.ribbon { height: 87px; flex: none; display: flex; padding: 6px 0 3px 3px; border-bottom: 1px solid #8a8a8a; font-size: 11px; line-height: 13px; }
.cmd { display: flex; flex-direction: column; align-items: center; justify-content: flex-start; padding: 13px 5px 0; text-align: center; }
.cmd svg { width: 18px; height: 18px; margin-bottom: 1px; }
.cmd.drop { padding-top: 6px; }
.cmd.drop .arr { margin: auto 0 8px; }
.cmd.off { color: #b8b8b8; }
.cmd.active { background: #b0b0b0; border: 1px solid #777; padding: 12px 3px 0; margin: 0 1px; }
.sep { width: 1px; background: #ccc; margin: 0 1px; flex: none; }

.work { flex: 1; min-height: 0; display: flex; position: relative; }
.tabs { position: absolute; left: 0; top: 0; z-index: 3; display: flex; height: 22px; }
.tabs button { height: 21px; padding: 0 7px; border: 1px solid #8a8a8a; border-width: 0 1px 1px 0; background: #d4d4d4; }
.tabs .on { background: #f7f7f7; font-weight: 700; border-bottom-color: #f7f7f7; padding: 0 6px; color: #333; }
.tabs .last { padding: 0 13px; }
.side { width: 230px; flex: none; display: flex; flex-direction: column; padding-top: 26px; border-right: 1px solid #8a8a8a; background: #f7f7f7; border-left: 1px solid #bbb; }
.grip { height: 16px; flex: none; border: 1px solid #bbb; border-width: 1px 0; display: flex; align-items: center; justify-content: center; padding-right: 4px; }
.grip i, .handle i { width: 6px; height: 6px; border: 1px solid #999; border-radius: 50%; background: #ddd; }
.panes { display: flex; flex: none; height: 26px; margin-top: 4px; padding-left: 1px; }
.panes button { width: 40px; display: flex; align-items: center; justify-content: center; background: #d4d4d4; border: 1px solid #8a8a8a; border-left: 0; }
.panes .on { background: #f7f7f7; border-bottom: 0; border-top: 0; }
.panes svg { width: 19px; height: 18px; }
.panes .more { background: none; border: 0; flex: 1; padding-left: 3px; }
.more svg { width: 8px; height: 14px; }
.filter { height: 26px; flex: none; margin: 0 5px 0 4px; border: 1px solid #bbb; display: flex; align-items: center; background: #fff; padding-left: 2px; }
.filter svg { width: 18px; height: 18px; }
.filter .arr { width: 8px; margin-top: 8px; }
.treebox { flex: 1; min-height: 0; display: flex; }
.tree { flex: 1; min-width: 0; margin: 0; padding: 1px 0 0; list-style: none; overflow: hidden; }
.tree li { height: 22px; display: flex; align-items: center; white-space: nowrap; padding-left: 27px; }
.tree li.top { padding-left: 4px; }
.tree .tw { width: 14px; margin-right: 9px; flex: none; display: flex; justify-content: center; }
.tw::after { content: ""; border: 4px solid transparent; }
.tw.shut::after { border-left: 5px solid #555; border-right: 0; }
.tw.open::after { border-top: 5px solid #444; border-bottom: 0; }
.tree svg { width: 18px; height: 18px; margin-right: 4px; }
.tree svg.w { width: 16px; height: 16px; margin: 0 6px 0 2px; }
.tree .bad { color: #87871d; }
.vbar { width: 15px; margin-right: 2px; background: #f0f0f0; display: flex; flex-direction: column; align-items: center; padding: 5px 0 3px; flex: none; }
.vbar svg, .hbar svg { width: 9px; height: 9px; }
.vthumb { width: 100%; flex: 1; background: #cdcdcd; }
.vbar svg:first-child { margin-bottom: 303px; }
.vbar svg:last-child { margin-top: 193px; }
.hbar { height: 16px; margin: 0 18px 6px 1px; display: flex; align-items: center; padding: 0 4px 0 3px; background: #f0f0f0; flex: none; }
.hthumb { width: 86px; height: 15px; background: #cdcdcd; margin: 0 auto 0 4px; }

.view { flex: 1; min-width: 0; position: relative; background:
  linear-gradient(180deg, rgba(253,253,254,0) 50%, rgba(253,253,254,.45) 59%, #fdfdfe 70%, #fdfdfe 85%, #f8f8fa 100%),
  radial-gradient(ellipse 76% 68% at 8% -4%, #fff 55%, rgba(255,255,255,0) 100%),
  radial-gradient(ellipse 22% 50% at 100% 8%, #f4f1f5 5%, rgba(236,238,244,0) 100%),
  radial-gradient(ellipse 90% 75% at 78% 45%, #dcdfe8 25%, #eef0f6 100%); }
.model { position: absolute; inset: 0; width: 100%; height: 100%; }
.axis { font-size: 10px; stroke: none; }
.mark-text { font: 300 65px "Liberation Serif", "Noto Sans CJK SC", serif; fill: #fff; fill-opacity: .9; filter: drop-shadow(2px 2px 0 rgba(70,70,90,.6)); }
.mark-text tspan:first-child { font-size: 74px; }
.heads { position: absolute; top: 3px; left: 0; right: 0; display: flex; justify-content: center; padding-right: 2px; }
.heads .arr { width: 14px; align-self: center; opacity: .6; }
.docwin { position: absolute; top: 3px; right: 3px; display: flex; color: #999; }
.task { position: absolute; top: 51px; right: 0; border: 1px solid #888; border-right: 0; }
.task button { display: block; width: 21px; height: 24px; padding-left: 3px; background: #d4d4d4; border-bottom: 1px solid #888; overflow: hidden; }
.task button:last-child { border: 0; }
.task .on { background: #fff; }
.task svg { width: 18px; height: 18px; }
.handle { position: absolute; left: -1px; top: 443px; width: 9px; height: 39px; background: #f7f7f7; border: 1px solid #8a8a8a; border-left: 0; display: flex; align-items: center; justify-content: center; }

.sheets { flex: none; height: 16px; display: flex; border: 1px solid #8a8a8a; border-width: 1px 0; line-height: 14px; }
.sheets button { padding: 0 8px; background: #d8d8d8; border-right: 1px solid #8a8a8a; }
.sheets .on { background: #fff; font-weight: 700; padding: 0 8px 0 11px; }
.sheets .wide { padding-right: 14px; }
.nav { display: flex; width: 67px; background: #aaa; }
.sheets .nav button { flex: 1; padding: 0; display: flex; align-items: center; justify-content: center; background: #b5b5b5; border: 1px solid #999; }
.nav svg { width: 11px; height: 11px; }
.status { flex: none; height: 14px; overflow: hidden; display: flex; align-items: flex-start; line-height: 19px; white-space: nowrap; }
.ver { flex: 1; padding-left: 1px; }
.over { color: #d01818; display: flex; margin-right: 14px; }
.over svg { width: 14px; height: 14px; margin: 3px 2px 0 0; }
.mode { width: 145px; flex: none; }
.units { width: 52px; }
.status .arr { margin-top: 8px; }
.upw::after { transform: rotate(180deg); }
.tag { width: 16px; height: 16px; margin: 2px 0 0 59px; }
```
FILE: app.js
```js
// Feature tree rows: [level, expander, icon, has warning, label]
const block = [
  [2, "shut", "part", 1, "(f) Rotator 01<1> (Def"],
  [2, "shut", "part", 1, "(+) Rotator 02<1> (De"],
  [2, "shut", "part", 1, "(+) Rotator 02<2> (De"],
  [2, "shut", "part", 1, "(+) Rotator 01<3> (De"],
  ...[1, 2, 3, 4].map(n => [2, "shut", "part", 0, `(-) Rotator Pin 101<${n}> (De`]),
  ...[1, 2].map(() => [2, "shut", "part", 0, "(-) Rotator Rotate Pin 101<"]),
  [2, "shut", "mates", 1, "Mates"]
];
const rows = [
  [2, "", "plane", 0, "Top Plane"],
  [2, "", "plane", 0, "Right Plane"],
  [2, "", "origin", 0, "Origin"],
  ...block,
  [1, "open", "asm", 1, "(f) Rotator Assembly 010<"],
  [2, "shut", "fmates", 0, "Mates in Assem4"],
  [2, "shut", "fhist", 0, "History"],
  [2, "", "fsens", 0, "Sensors"],
  [2, "shut", "fann", 0, "Annotations"],
  [2, "", "plane", 0, "Front Plane"],
  [2, "", "plane", 0, "Top Plane"],
  [2, "", "plane", 0, "Right Plane"],
  [2, "", "origin", 0, "Origin"],
  ...block,
  [1, "shut", "part", 1, "(+) Bearing Pin 02<1> (De"],
  [1, "shut", "part", 0, "(-) Conecting Rod<5> (Default"],
  [1, "shut", "part", 0, "(-) Conecting Rod<6> (Default"]
];
const tree = document.getElementById("tree");
for (const [level, twist, icon, bad, label] of rows) {
  const li = document.createElement("li");
  if (level === 1) li.className = "top";
  li.innerHTML = `<i class="tw ${twist}"></i><svg><use href="#${icon}"/></svg>` +
    (bad ? '<svg class="w"><use href="#warn"/></svg>' : "");
  const text = document.createElement("span");
  if (bad) text.className = "bad";
  text.textContent = label;
  li.append(text);
  tree.append(li);
}
```
